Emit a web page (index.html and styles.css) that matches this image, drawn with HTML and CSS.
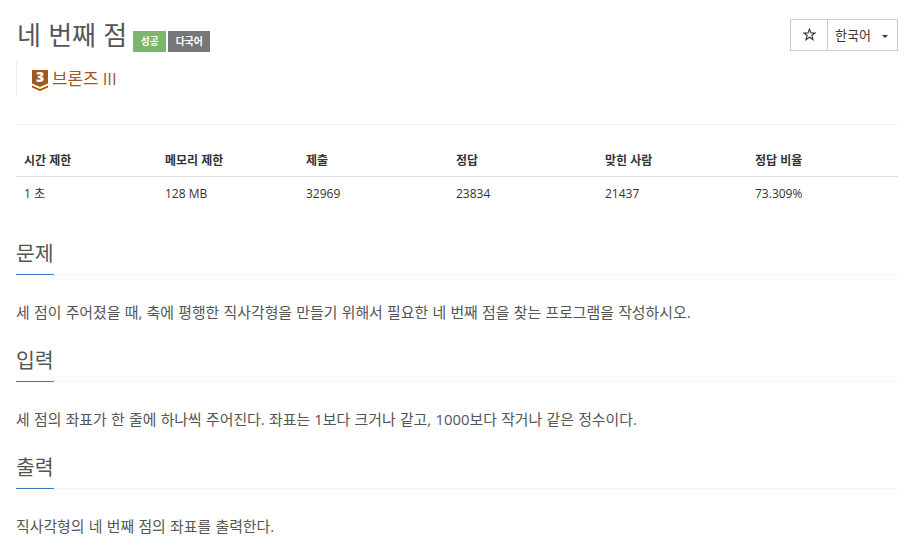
FILE: index.html
```html
<!DOCTYPE html>
<html lang="ko">
<head>
<meta charset="utf-8">
<title>네 번째 점</title>
<link rel="stylesheet" href="styles.css">
</head>
<body>
<main class="page">
  <header class="head">
    <div class="head-left">
      <h1 class="title"><span>네 번째 점</span><span class="label green">성공</span><span class="label gray">다국어</span></h1>
      <div class="tier">
        <svg class="tier-icon" width="16" height="21" viewBox="0 0 16 21" aria-hidden="true">
          <path d="M0 0H16V13.500L8 17L0 13.500Z" fill="#a0591e"/>
          <path d="M0 15.500L8 19L16 15.500V17.500L8 21L0 17.500Z" fill="#ad5600"/>
          <text x="8" y="12" text-anchor="middle" class="tier-num">3</text>
        </svg>
        <span class="tier-name">브론즈 III</span>
      </div>
    </div>
    <div class="btns">
      <button class="btn star" aria-label="즐겨찾기">
        <svg width="13" height="13" viewBox="0 0 13 13" aria-hidden="true"><path d="M6.500 1.200L8 5H12L8.800 7.500L10 11.700L6.500 9.200L3 11.700L4.200 7.500L1 5H5Z" fill="none" stroke="#333" stroke-width="1.100"/></svg>
      </button>
      <button class="btn lang">한국어<span class="caret"></span></button>
    </div>
  </header>
  <hr class="rule">
  <table class="info">
    <thead><tr><th class="c1">시간 제한</th><th class="c2">메모리 제한</th><th class="c3">제출</th><th class="c4">정답</th><th class="c5">맞힌 사람</th><th>정답 비율</th></tr></thead>
    <tbody><tr><td>1 초</td><td>128 MB</td><td>32969</td><td>23834</td><td>21437</td><td>73.309%</td></tr></tbody>
  </table>
  <section class="sec">
    <div class="sec-head"><h2>문제</h2></div>
    <p>세 점이 주어졌을 때, 축에 평행한 직사각형을 만들기 위해서 필요한 네 번째 점을 찾는 프로그램을 작성하시오.</p>
  </section>
  <section class="sec">
    <div class="sec-head"><h2>입력</h2></div>
    <p>세 점의 좌표가 한 줄에 하나씩 주어진다. 좌표는 1보다 크거나 같고, 1000보다 작거나 같은 정수이다.</p>
  </section>
  <section class="sec">
    <div class="sec-head"><h2>출력</h2></div>
    <p>직사각형의 네 번째 점의 좌표를 출력한다.</p>
  </section>
</main>
</body>
</html>
```
FILE: styles.css
```css
* { box-sizing: border-box; }
html, body { margin: 0; background: #fff; }
body {
  font-family: "Open Sans", "Noto Sans CJK KR", sans-serif;
  color: #333;
  font-size: 14px;
  overflow: hidden;
}
.page { width: 920px; height: 552px; padding: 0 22px 0 16px; overflow: hidden; }
.head { display: flex; justify-content: space-between; align-items: flex-start; padding-top: 19px; }
.title { margin: 0; display: flex; align-items: flex-end; font-weight: 400; font-size: 26px; word-spacing: 0.500px; line-height: 32px; color: #555; height: 33px; padding-left: 1px; }
.title > span:first-child { position: relative; top: -1px; }
.label { display: block; font-size: 9.800px; font-weight: 700; color: #fff; height: 21px; line-height: 21px; text-align: center; }
.green { background: #7cb56b; width: 33px; margin-left: 6px; }
.gray { background: #777; width: 42px; margin-left: 2px; }
.tier { margin-top: 9px; height: 35px; border-left: 1px solid #eee; padding-left: 15px; display: flex; align-items: center; gap: 4px; }
.tier-icon { display: block; margin-top: 3px; overflow: visible; }
.tier-num { font-family: "Open Sans", sans-serif; font-size: 14px; font-weight: 800; fill: #fff; }
.tier-name { font-size: 16.800px; line-height: 22px; color: #a0591e; }
.btns { display: flex; }
.btn { height: 32px; background: #fff; border: 1px solid #ccc; color: #333; font: inherit; font-size: 13px; padding: 0 0 2px; display: flex; align-items: center; justify-content: center; }
.star { width: 38px; }
.lang { width: 71px; margin-left: -1px; padding-left: 7px; justify-content: flex-start; }
.caret { width: 0; height: 0; border-top: 3px solid #333; border-left: 3px solid transparent; border-right: 3px solid transparent; margin-left: 11px; margin-top: 5px; }
.rule { margin: 28px 0 0; border: 0; border-top: 1px solid #eee; }
.info { width: 882px; margin-top: 19px; border-collapse: collapse; table-layout: fixed; font-size: 12px; line-height: 17px; }
.info th, .info td { text-align: left; padding: 8px; }
.info th { font-weight: 700; border-bottom: 1px solid #ddd; padding-top: 8px; padding-bottom: 7px; }
.info td { padding-top: 8px; padding-bottom: 8px; }
.c1 { width: 141px; }
.c2 { width: 141px; }
.c3 { width: 150px; }
.c4 { width: 149px; }
.c5 { width: 150px; }
.sec-head { border-bottom: 1px dotted #e6e6e6; height: 43px; }
.sec h2 { display: inline-block; margin: 0; height: 43px; font-size: 20.500px; font-weight: 400; line-height: 30px; padding-top: 6px; color: #555; border-bottom: 1px solid #3c78c2; }
.sec p { margin: 0; height: 64px; padding-top: 27px; font-size: 14.900px; word-spacing: 0.400px; line-height: 20px; color: #555; }
.info + .sec { margin-top: 22px; }
```
